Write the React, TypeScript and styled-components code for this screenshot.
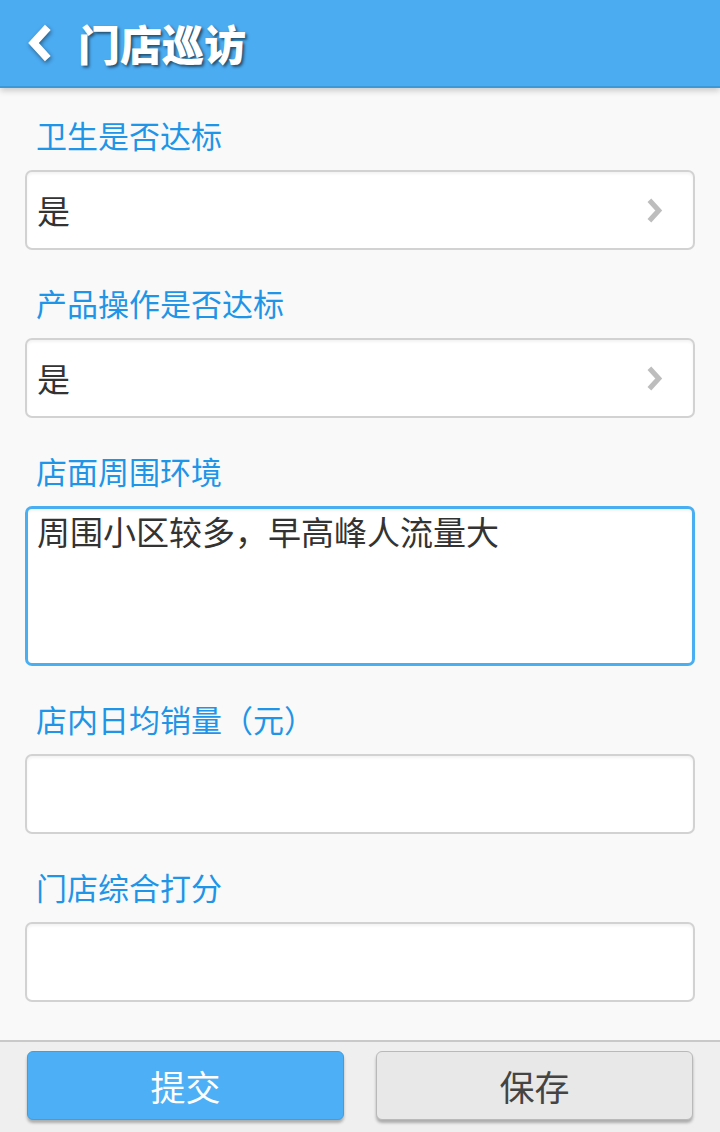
import React, { FC } from 'react';
import styled, { createGlobalStyle } from 'styled-components';

const GlobalStyle = createGlobalStyle`
    html, body {
        margin: 0;
        padding: 0;
        background: #f9f9f9;
    }
    * {
        box-sizing: border-box;
    }
    body {
        font-family: "Noto Sans CJK SC", "Noto Sans", sans-serif;
    }
`

const Page = styled.div`
    width: 720px;
    min-height: 1132px;
    display: flex;
    flex-direction: column;
    background: #f9f9f9;
`

const Header = styled.header`
    height: 88px;
    background: #4bacf2;
    border-bottom: 2px solid #3d98d8;
    box-shadow: 0 3px 6px rgba(0, 0, 0, 0.18);
    display: flex;
    align-items: center;
    padding-left: 26px;
    position: relative;
    z-index: 1;
`

const BackButton = styled.button`
    border: none;
    background: none;
    padding: 0;
    width: 28px;
    height: 40px;
    display: flex;
    align-items: center;
    justify-content: center;
    filter: drop-shadow(1px 2px 2px rgba(0, 0, 0, 0.45));
`

const Title = styled.h1`
    margin: -2px 0 0 24px;
    color: #fff;
    font-size: 42px;
    font-weight: 900;
    letter-spacing: 0;
    text-shadow: 2px 2px 3px rgba(0, 0, 0, 0.55);
`

const Main = styled.main`
    flex: 1;
    padding: 17px 25px 0;
    display: flex;
    flex-direction: column;
    gap: 23px;
`

const Field = styled.div`
    display: flex;
    flex-direction: column;
`

const Label = styled.label`
    height: 60px;
    line-height: 60px;
    padding-left: 11px;
    margin-bottom: 5px;
    font-size: 31px;
    color: #1f95e8;
`

const Box = styled.div<{ tall?: boolean; focused?: boolean }>`
    height: ${({ tall }) => (tall ? '160px' : '80px')};
    background: #fff;
    border: ${({ focused }) => (focused ? '3px solid #4aaef3' : '2px solid #d2d2d2')};
    border-radius: 7px;
    box-shadow: inset 0 2px 3px rgba(0, 0, 0, 0.05);
    display: flex;
    align-items: ${({ tall }) => (tall ? 'flex-start' : 'center')};
    padding: ${({ tall }) => (tall ? '0 9px' : '0 30px 0 10px')};
`

const Value = styled.span`
    flex: 1;
    font-size: 33px;
    color: #333;
    line-height: 44px;
`

const Footer = styled.footer`
    height: 92px;
    border-top: 2px solid #c9c9c9;
    background: #efefef;
    display: flex;
    gap: 32px;
    padding: 9px 27px 0;
`

const ActionButton = styled.button<{ primary?: boolean }>`
    width: 318px;
    height: 69px;
    border-radius: 6px;
    border: 1px solid ${({ primary }) => (primary ? '#3f9ee2' : '#b9b9b9')};
    background: ${({ primary }) => (primary ? '#4dafF5' : '#e8e8e8')};
    color: ${({ primary }) => (primary ? '#fff' : '#444')};
    box-shadow: 0 3px 3px rgba(0, 0, 0, 0.28);
    font-family: "Noto Sans CJK SC", sans-serif;
    font-size: 35px;
    padding: 0;
`

const Chevron: FC<{ color: string; width: number; height: number; stroke: number; left?: boolean }> = ({ color, width, height, stroke, left }) => (
    <svg width={width} height={height} viewBox="0 0 20 30">
        <polyline
            points={left ? '16,3 5,15 16,27' : '4,3 15,15 4,27'}
            fill="none"
            stroke={color}
            strokeWidth={stroke}
            strokeLinecap="butt"
            strokeLinejoin="miter"
        />
    </svg>
)

interface FieldData {
    label: string;
    value?: string;
    select?: boolean;
    tall?: boolean;
    focused?: boolean;
}

const fields: FieldData[] = [
    { label: '卫生是否达标', value: '是', select: true },
    { label: '产品操作是否达标', value: '是', select: true },
    { label: '店面周围环境', value: '周围小区较多，早高峰人流量大', tall: true, focused: true },
    { label: '店内日均销量（元）' },
    { label: '门店综合打分' },
]

const App: FC = () => {
    return (
        <Page>
            <GlobalStyle />
            <Header>
                <BackButton>
                    <Chevron color="#fff" width={26} height={40} stroke={6} left />
                </BackButton>
                <Title>门店巡访</Title>
            </Header>
            <Main>
                {fields.map(field => (
                    <Field key={field.label}>
                        <Label>{field.label}</Label>
                        <Box tall={field.tall} focused={field.focused}>
                            <Value>{field.value}</Value>
                            {field.select && <Chevron color="#bdbdbd" width={17} height={27} stroke={6} />}
                        </Box>
                    </Field>
                ))}
            </Main>
            <Footer>
                <ActionButton primary>提交</ActionButton>
                <ActionButton>保存</ActionButton>
            </Footer>
        </Page>
    )
}

export default App;
